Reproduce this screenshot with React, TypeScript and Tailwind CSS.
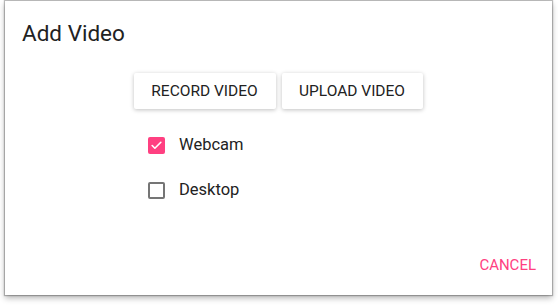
import { Check } from "lucide-react";

function Checkbox({ checked, label }: { checked: boolean; label: string }) {
  return (
    <label className="flex h-[45px] items-center gap-[14px]">
      {checked ? (
        <span className="flex h-[17px] w-[17px] items-center justify-center rounded-[2px] bg-[#ff4081]">
          <Check className="h-[13px] w-[13px] text-white" strokeWidth={3} />
        </span>
      ) : (
        <span className="h-[17px] w-[17px] rounded-[2px] border-2 border-[#757575]" />
      )}
      <span className="text-[16.5px] text-[#222]">{label}</span>
    </label>
  );
}

export default function App() {
  return (
    <div className="h-[307px] w-[558px] bg-white pl-[5px] pt-[1px] font-['Roboto',sans-serif]">
      <div className="flex h-[294px] w-[547px] flex-col bg-white shadow-[0_0_1px_1px_rgba(0,0,0,0.25),0_3px_6px_rgba(0,0,0,0.3)]">
        <h2 className="px-[17px] pt-[19px] text-[22.5px] leading-[26px] text-[#222]">Add Video</h2>
        <div className="mt-[27px] flex justify-center gap-[6px] pr-[1px]">
          <button className="h-[36px] w-[142px] rounded-[2px] bg-white pt-[1px] text-[15.5px] text-[#222] shadow-[0_1px_4px_rgba(0,0,0,0.25)]">
            RECORD VIDEO
          </button>
          <button className="h-[36px] w-[141px] rounded-[2px] bg-white pt-[1px] text-[15.5px] text-[#222] shadow-[0_1px_4px_rgba(0,0,0,0.25)]">
            UPLOAD VIDEO
          </button>
        </div>
        <div className="mt-[14px] flex flex-col pl-[143px]">
          <Checkbox checked label="Webcam" />
          <Checkbox checked={false} label="Desktop" />
        </div>
        <div className="mt-auto flex justify-end px-[16px] pb-[19px]">
          <button className="text-[15px] text-[#ff4081]">CANCEL</button>
        </div>
      </div>
    </div>
  );
}
